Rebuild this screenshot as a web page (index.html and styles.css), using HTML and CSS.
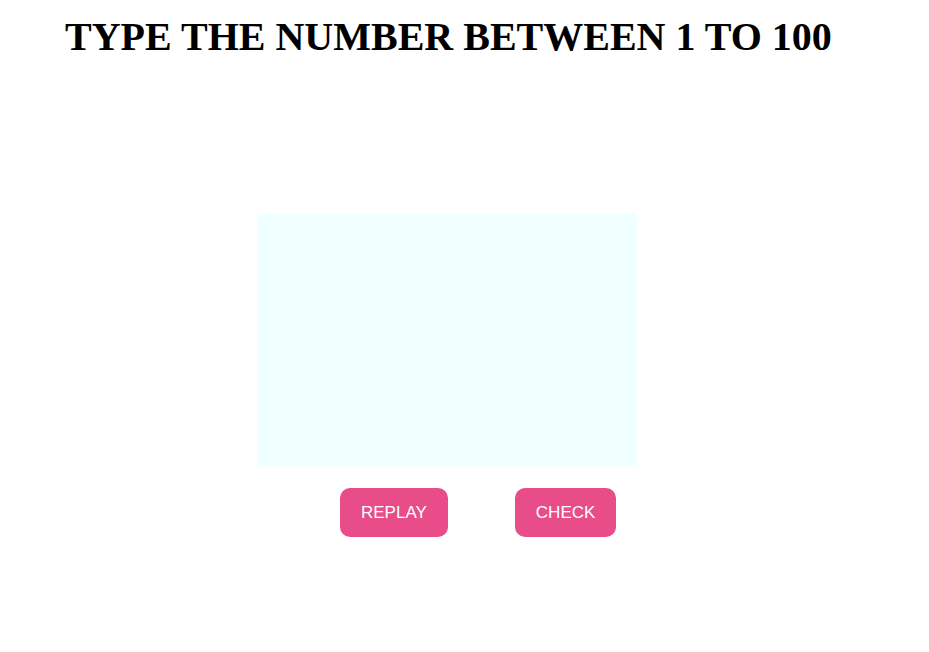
FILE: index.html
```html
<!DOCTYPE html>
<html>
<head>
<meta charset="utf-8">
<link rel="stylesheet" href="styles.css">
</head>
<body>
<div class="page">
  <h1 class="title">TYPE THE NUMBER BETWEEN 1 TO 100</h1>
  <div class="board"></div>
  <div class="actions">
    <button class="btn">REPLAY</button>
    <button class="btn">CHECK</button>
  </div>
</div>
</body>
</html>
```
FILE: styles.css
```css
html, body {
  margin: 0;
  padding: 0;
  background: #ffffff;
}
.page {
  display: flex;
  flex-direction: column;
  align-items: flex-start;
  padding-top: 14px;
}
.title {
  margin: 0 0 0 65px;
  font-family: "Liberation Serif", "Times New Roman", serif;
  font-weight: bold;
  font-size: 40px;
  line-height: 46px;
  color: #000;
}
.board {
  margin: 153px 0 0 257px;
  width: 380px;
  height: 252px;
  background: #f0ffff;
}
.actions {
  display: flex;
  gap: 67px;
  margin: 23px 0 0 340px;
}
.btn {
  font-family: "Liberation Sans", Arial, sans-serif;
  font-size: 17px;
  line-height: 19px;
  padding: 15px 21px;
  border: none;
  border-radius: 10px;
  background: #e94d89;
  color: #ffffff;
}
```
